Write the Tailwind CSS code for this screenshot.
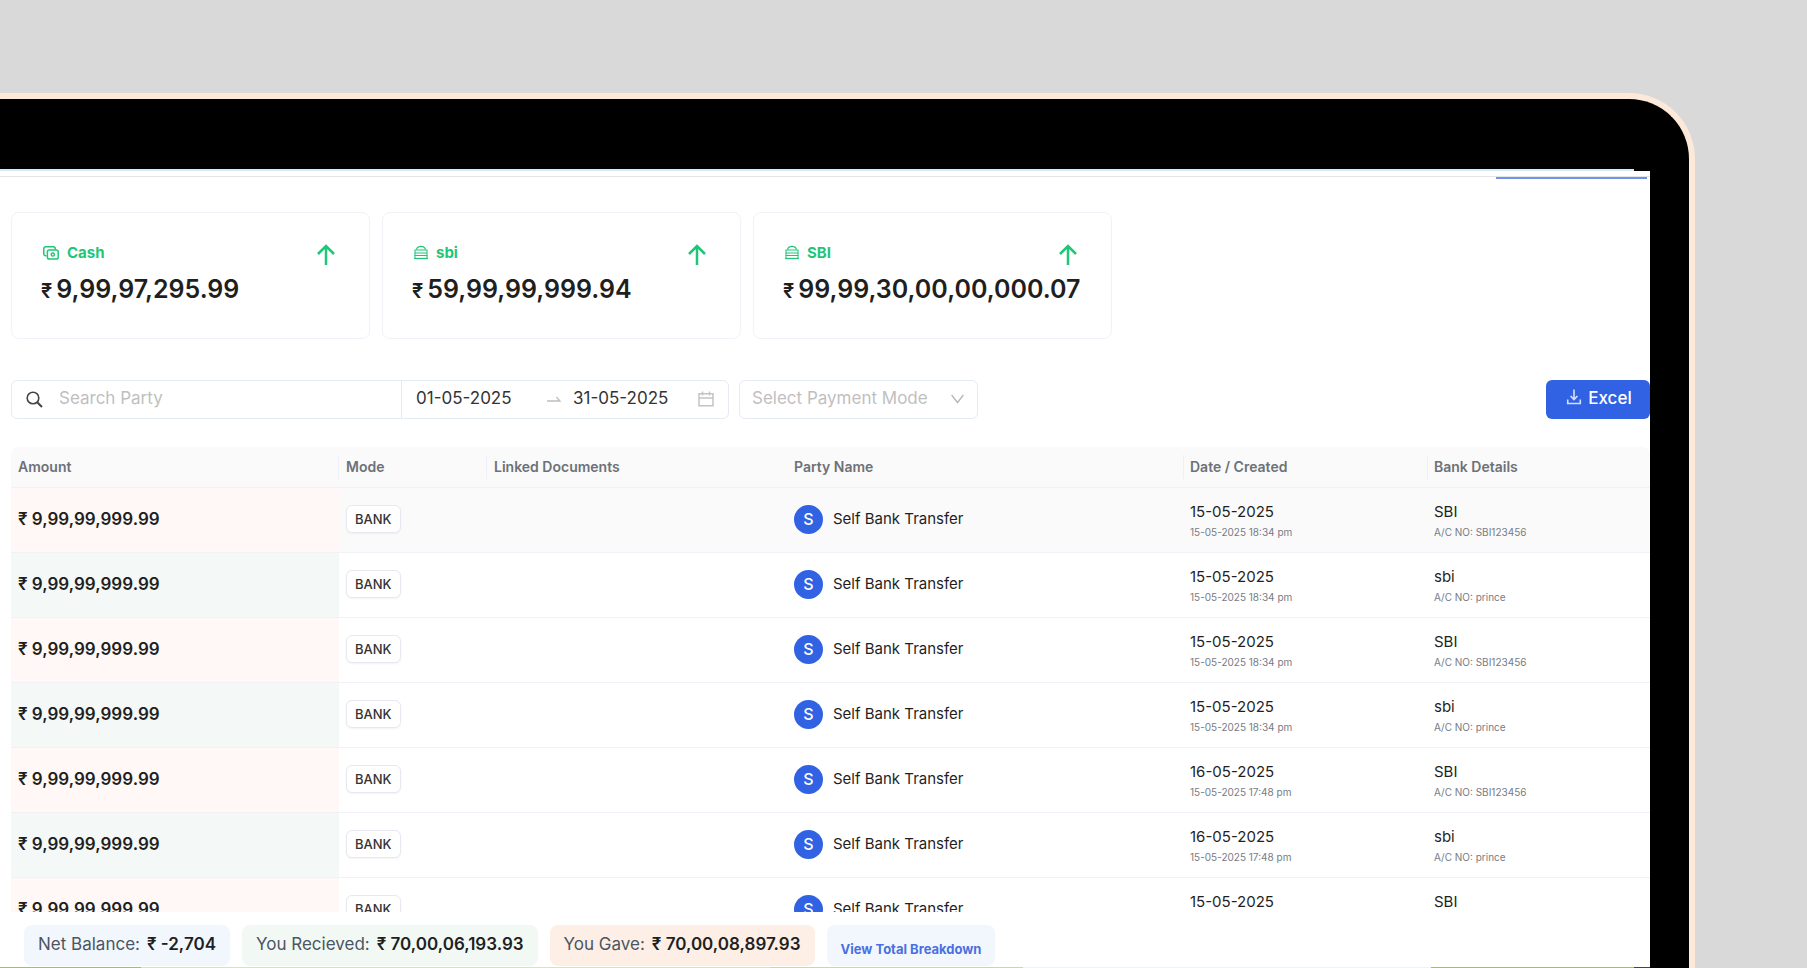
<!DOCTYPE html>
<html lang="en">

<head>
    <meta charset="UTF-8">
    <meta name="viewport" content="width=device-width, initial-scale=1.0">
    <title>Payments Timeline</title>
    <script src="https://cdn.jsdelivr.net/npm/@tailwindcss/browser@4"></script>
    <style>
        body {
            font-family: 'Inter', 'Liberation Sans', sans-serif;
        }
    </style>
    <script>
        document.addEventListener('DOMContentLoaded', function () {
            const payments = [
                { type: 'gave', date: '15-05-2025', created: '15-05-2025 18:34 pm', bank: 'SBI', account: 'SBI123456' },
                { type: 'received', date: '15-05-2025', created: '15-05-2025 18:34 pm', bank: 'sbi', account: 'prince' },
                { type: 'gave', date: '15-05-2025', created: '15-05-2025 18:34 pm', bank: 'SBI', account: 'SBI123456' },
                { type: 'received', date: '15-05-2025', created: '15-05-2025 18:34 pm', bank: 'sbi', account: 'prince' },
                { type: 'gave', date: '16-05-2025', created: '15-05-2025 17:48 pm', bank: 'SBI', account: 'SBI123456' },
                { type: 'received', date: '16-05-2025', created: '15-05-2025 17:48 pm', bank: 'sbi', account: 'prince' },
                { type: 'gave', date: '15-05-2025', created: '15-05-2025 17:48 pm', bank: 'SBI', account: 'SBI123456' },
            ];
            const tbody = document.getElementById('payments-body');

            payments.forEach((payment, index) => {
                const row = document.createElement('tr');
                row.className = index === 0 ? 'h-[65px] bg-[#fafafa]' : 'h-[65px]';
                const amountBg = payment.type === 'gave' ? 'bg-[#fff8f7]' : 'bg-[#f4f9f7]';
                row.innerHTML = `
                    <td class="border-b border-[#f1f2f8] px-[7px] text-[17px] font-semibold ${amountBg}">₹ 9,99,99,999.99</td>
                    <td class="border-b border-[#f1f2f8] px-[7px] pb-[2px]">
                        <span class="inline-block rounded-md border border-[#e6e9f1] bg-white px-2 text-[13px] leading-[26px] font-medium text-[#333] shadow-xs">BANK</span>
                    </td>
                    <td class="border-b border-[#f1f2f8]"></td>
                    <td class="border-b border-[#f1f2f8] px-[6px] pb-[2px]">
                        <div class="flex items-center gap-[10px]">
                            <span class="flex size-[29px] items-center justify-center rounded-full bg-[#3062e3] text-base font-medium text-white">S</span>
                            Self Bank Transfer
                        </div>
                    </td>
                    <td class="border-b border-[#f1f2f8] px-[6px]">
                        <div class="leading-6">${payment.date}</div>
                        <div class="text-[10px] leading-4 text-[#777b84]">${payment.created}</div>
                    </td>
                    <td class="border-b border-[#f1f2f8] px-[6px]">
                        <div class="leading-6">${payment.bank}</div>
                        <div class="text-[10px] leading-4 text-[#777b84]">A/C NO: ${payment.account}</div>
                    </td>
                `;
                tbody.appendChild(row);
            });
        });
    </script>
</head>

<body class="flex h-screen flex-col overflow-hidden bg-[#d9d9d9] pt-[93px] pr-28 text-[#1f1f1f]">
    <!-- laptop frame -->
    <div class="flex min-h-0 flex-1 flex-col rounded-tr-[66px] border-t-6 border-r-6 border-[#fce9d9] bg-black pt-[70px] pr-[39px]">
        <div class="mr-4 h-[2px] shrink-0 bg-[#d3ecf9]"></div>
        <div class="flex min-h-0 flex-1 flex-col bg-white">
            <header class="h-[8px] shrink-0 pt-[5px]">
                <div class="h-px bg-[#e4e5e8]"></div>
                <div class="mr-[3px] ml-auto h-[2px] w-[151px] bg-[#7191ea]"></div>
            </header>

            <main class="flex min-h-0 flex-1 flex-col pt-[33px] pl-[11px]">
                <section class="flex shrink-0 gap-3">
                    <div class="h-[127px] w-[359px] rounded-lg border border-[#f1f2f8] pt-[29px] pr-[34px] pl-[29px]">
                        <div class="flex items-start justify-between">
                            <h3 class="flex items-center gap-2 pl-[2px] text-[15px] leading-[22px] font-bold text-[#1fc677]">
                                <svg class="size-4" viewBox="0 0 16 16" fill="none" stroke="currentColor" stroke-width="1.5">
                                    <path d="M3.500 10.800H2.600A1.800 1.800 0 0 1 .8 9V3.600a1.800 1.800 0 0 1 1.800-1.800h7.800a1.800 1.800 0 0 1 1.800 1.800v1" />
                                    <rect x="4.400" y="5" width="10.800" height="9" rx="1.800" />
                                    <circle cx="9.800" cy="9.500" r="1.600" />
                                </svg>
                                Cash
                            </h3>
                            <svg class="mt-[2px] h-[22px] w-[18px]" viewBox="0 0 18 22" fill="none" stroke="#1fc677" stroke-width="2.5">
                                <path d="M9 21V2.500M1 10l8-8 8 8" />
                            </svg>
                        </div>
                        <p class="flex items-baseline gap-1 text-[25px] leading-[46px] font-semibold"><span class="text-xl">₹</span>9,99,97,295.99</p>
                    </div>
                    <div class="h-[127px] w-[359px] rounded-lg border border-[#f1f2f8] pt-[29px] pr-[34px] pl-[29px]">
                        <div class="flex items-start justify-between">
                            <h3 class="flex items-center gap-2 pl-[2px] text-[15px] leading-[22px] font-bold text-[#1fc677]">
                                <svg class="h-4 w-[14px]" viewBox="0 0 14 16" fill="none" stroke="currentColor">
                                    <path d="M2.500 4.500C3.500.4 10.500.4 11.500 4.500" stroke-width="1.200" />
                                    <path d="M.5 5h13M.5 8h13M.5 10.500h13M1 5v9M13 5v9" stroke-width="1" />
                                    <path d="M0 13.500h14" stroke-width="1.300" />
                                </svg>
                                sbi
                            </h3>
                            <svg class="mt-[2px] h-[22px] w-[18px]" viewBox="0 0 18 22" fill="none" stroke="#1fc677" stroke-width="2.5">
                                <path d="M9 21V2.500M1 10l8-8 8 8" />
                            </svg>
                        </div>
                        <p class="flex items-baseline gap-1 text-[25px] leading-[46px] font-semibold"><span class="text-xl">₹</span>59,99,99,999.94</p>
                    </div>
                    <div class="h-[127px] w-[359px] rounded-lg border border-[#f1f2f8] pt-[29px] pr-[34px] pl-[29px]">
                        <div class="flex items-start justify-between">
                            <h3 class="flex items-center gap-2 pl-[2px] text-[15px] leading-[22px] font-bold text-[#1fc677]">
                                <svg class="h-4 w-[14px]" viewBox="0 0 14 16" fill="none" stroke="currentColor">
                                    <path d="M2.500 4.500C3.500.4 10.500.4 11.500 4.500" stroke-width="1.200" />
                                    <path d="M.5 5h13M.5 8h13M.5 10.500h13M1 5v9M13 5v9" stroke-width="1" />
                                    <path d="M0 13.500h14" stroke-width="1.300" />
                                </svg>
                                SBI
                            </h3>
                            <svg class="mt-[2px] h-[22px] w-[18px]" viewBox="0 0 18 22" fill="none" stroke="#1fc677" stroke-width="2.5">
                                <path d="M9 21V2.500M1 10l8-8 8 8" />
                            </svg>
                        </div>
                        <p class="flex items-baseline gap-1 text-[25px] leading-[46px] font-semibold"><span class="text-xl">₹</span>99,99,30,00,00,000.07</p>
                    </div>
                </section>

                <form class="mt-[41px] flex h-[39px] shrink-0 text-[17px]">
                    <label class="flex w-[391px] items-center gap-4 rounded-l-md border border-[#e6ebf3] pb-px pl-[14px]">
                        <svg class="size-[17px] shrink-0" viewBox="0 0 17 17" fill="none" stroke="#444" stroke-width="1.6">
                            <circle cx="7" cy="7" r="5.800" />
                            <path d="M11.200 11.200l4.800 4.800" stroke-width="2" />
                        </svg>
                        <input type="text" name="party" aria-label="Search Party" placeholder="Search Party"
                            class="w-full outline-none placeholder:text-[#bfbfbf]">
                    </label>
                    <div class="-ml-px flex w-[328px] items-center rounded-r-md border border-[#e6ebf3] px-[14px] pb-px text-[#333]">
                        <input type="text" name="from" aria-label="Start date" value="01-05-2025" class="w-[131px] outline-none">
                        <svg class="mr-[12px] h-4 w-[14px] shrink-0" viewBox="0 0 14 16" fill="none" stroke="#bfbfbf" stroke-width="1.3">
                            <path d="M0 10h13L9.500 6" />
                        </svg>
                        <input type="text" name="to" aria-label="End date" value="31-05-2025" class="w-[110px] outline-none">
                        <svg class="ml-auto size-4 shrink-0" viewBox="0 0 16 16" fill="none" stroke="#c4c4c4" stroke-width="1.5">
                            <path d="M1 2.800h14v12H1zM1 7h14M4.500 .5v4M11.500 .5v4" />
                        </svg>
                    </div>
                    <div class="relative ml-[10px] w-[239px]">
                        <select name="mode" aria-label="Payment mode"
                            class="h-full w-full appearance-none rounded-md border border-[#e6ebf3] bg-white px-3 pb-px text-[#bfbfbf]">
                            <option>Select Payment Mode</option>
                            <option>Cash</option>
                            <option>Bank</option>
                        </select>
                        <svg class="pointer-events-none absolute top-[14px] right-[14px] h-[10px] w-[13px]" viewBox="0 0 13 10" fill="none" stroke="#b8b8b8" stroke-width="1.4">
                            <path d="M.6 1l5.900 7.500L12.400 1" />
                        </svg>
                    </div>
                    <button type="button" class="ml-auto flex w-[104px] items-center justify-center gap-[6px] rounded-md bg-[#3062e3] pb-px pl-[2px] font-medium text-white">
                        <svg class="-mt-1 size-4" viewBox="0 0 16 16" fill="none" stroke="#d5e0fb" stroke-width="1.6">
                            <path d="M8 .5v9.500M4.600 7L8 10.500 11.400 7M1.700 10.500v4h12.600v-4" />
                        </svg>
                        Excel
                    </button>
                </form>

                <div class="mt-7 min-h-0 flex-1 overflow-hidden">
                    <table class="w-full table-fixed border-separate border-spacing-0 text-left text-[15px]">
                        <thead>
                            <tr class="h-[41px] text-sm text-[#6d7178]">
                                <th class="w-[328px] rounded-tl-lg border-b border-[#f1f2f8] bg-[#fafafa] p-0 font-semibold">
                                    <div class="border-r border-[#f0f1f6] px-[7px] leading-6">Amount</div>
                                </th>
                                <th class="w-[148px] border-b border-[#f1f2f8] bg-[#fafafa] p-0 font-semibold">
                                    <div class="border-r border-[#f0f1f6] px-[7px] leading-6">Mode</div>
                                </th>
                                <th class="w-[301px] border-b border-[#f1f2f8] bg-[#fafafa] px-[7px] font-semibold">Linked Documents</th>
                                <th class="w-[396px] border-b border-[#f1f2f8] bg-[#fafafa] p-0 font-semibold">
                                    <div class="border-r border-[#f0f1f6] px-[6px] leading-6">Party Name</div>
                                </th>
                                <th class="w-[244px] border-b border-[#f1f2f8] bg-[#fafafa] p-0 font-semibold">
                                    <div class="border-r border-[#f0f1f6] px-[6px] leading-6">Date / Created</div>
                                </th>
                                <th class="rounded-tr-lg border-b border-[#f1f2f8] bg-[#fafafa] px-[6px] font-semibold">Bank Details</th>
                            </tr>
                        </thead>
                        <tbody id="payments-body"></tbody>
                    </table>
                </div>

                <footer class="flex shrink-0 gap-3 pt-[13px] pb-px pl-[13px] text-[17px] text-[#4b5563]">
                    <div class="flex h-[41px] items-center gap-[7px] rounded-lg bg-[#f2f7fe] px-[14px] pb-px">Net Balance: <b class="font-semibold text-[#1f1f1f]">₹ -2,704</b></div>
                    <div class="flex h-[41px] items-center gap-[7px] rounded-lg bg-[#f2f9f5] px-[14px] pb-px">You Recieved: <b class="font-semibold text-[#1f1f1f]">₹ 70,00,06,193.93</b></div>
                    <div class="flex h-[41px] items-center gap-[7px] rounded-lg bg-[#fdefe5] px-[14px] pb-px">You Gave: <b class="font-semibold text-[#1f1f1f]">₹ 70,00,08,897.93</b></div>
                    <button type="button" class="h-[41px] rounded-lg bg-[#f2f7fe] px-[14px] pt-2 text-[13px] font-bold text-[#4a70e0]">View Total Breakdown</button>
                </footer>
            </main>
            <div class="flex h-px shrink-0">
                <div class="w-[141px] bg-[#a9bd5b]"></div>
                <div class="w-[629px] bg-[#d9e6a6]"></div>
                <div class="w-[253px] bg-[#cbdc8c]"></div>
                <div class="flex-1 bg-[#eef3f6]"></div>
                <div class="w-[203px] bg-[#a9bd5b]"></div>
                <div class="w-4 bg-[#444]"></div>
            </div>
        </div>
    </div>
</body>

</html>
